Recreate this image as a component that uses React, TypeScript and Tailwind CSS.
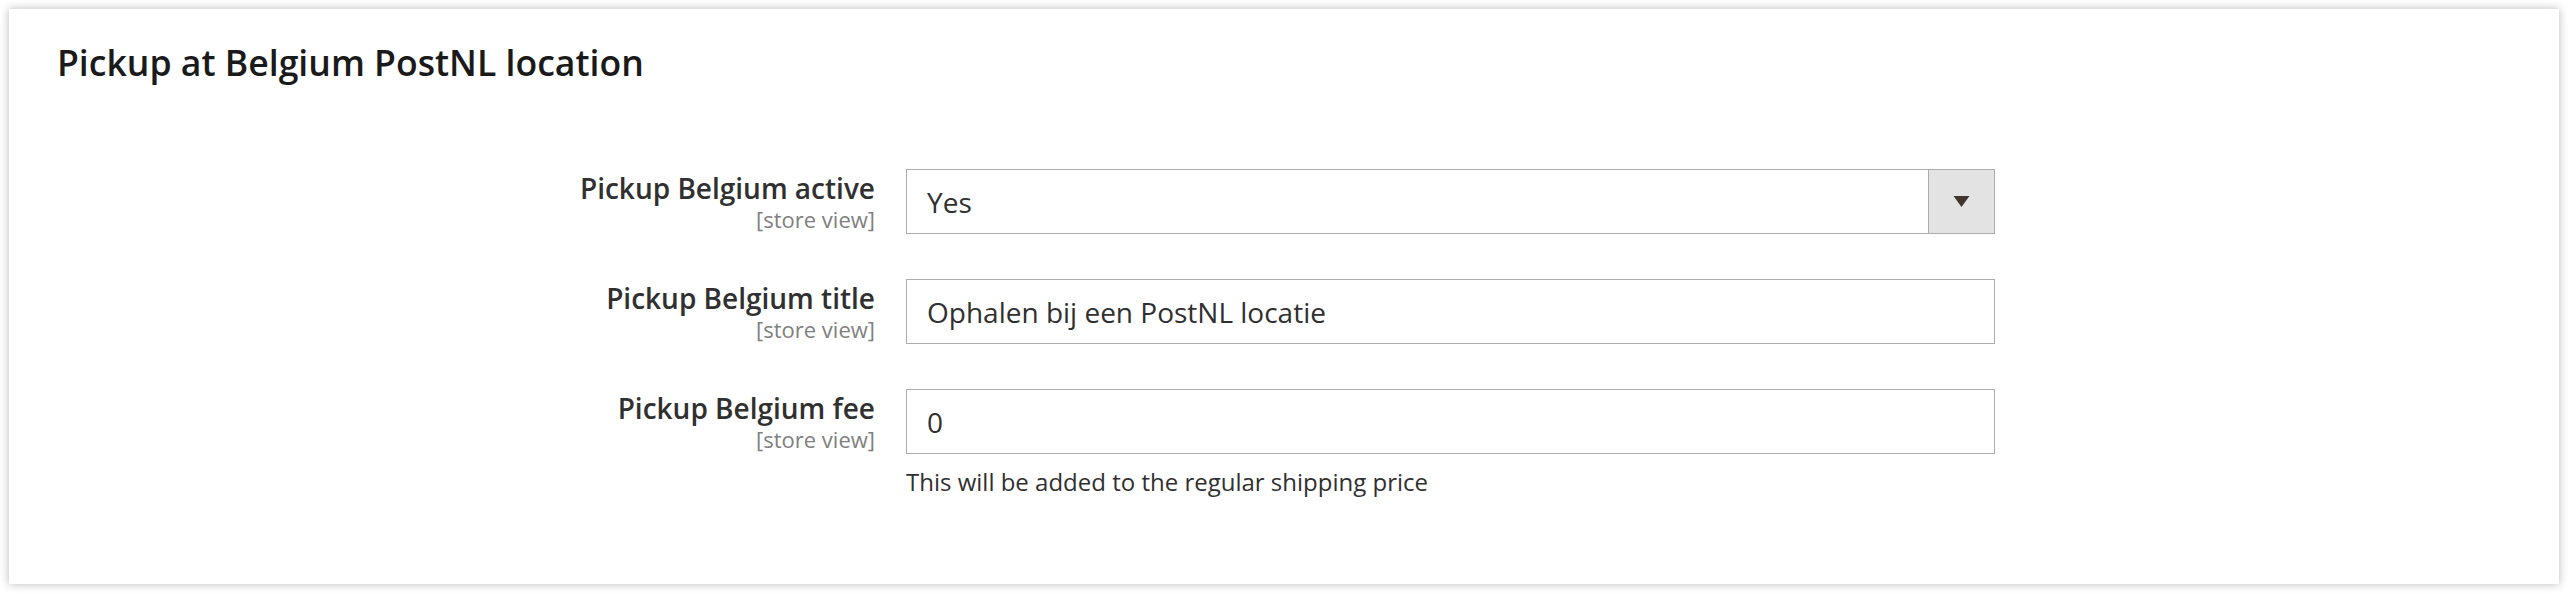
const rows = [
  { label: 'Pickup Belgium active', value: 'Yes', select: true },
  { label: 'Pickup Belgium title', value: 'Ophalen bij een PostNL locatie' },
  { label: 'Pickup Belgium fee', value: '0', note: 'This will be added to the regular shipping price' },
];

type Row = { label: string; value: string; select?: boolean; note?: string };

const Field = ({ row }: { row: Row }) => (
  <div className="flex gap-[31px]">
    <div className="w-[818px] pt-[3px] text-right">
      <div className="text-[28px] leading-[32px] font-semibold text-[#303030]">{row.label}</div>
      <div className="text-[22px] leading-[30px] text-[#808080]">[store view]</div>
    </div>
    <div className="w-[1089px]">
      <div className="flex h-[65px] border border-[#adadad] bg-white">
        <div className="flex flex-1 items-center pl-[20px] text-[28px] text-[#303030]">{row.value}</div>
        {row.select && (
          <div className="flex w-[66px] items-center justify-center border-l border-[#adadad] bg-[#e3e3e3]">
            <svg width="17" height="11" viewBox="0 0 17 11">
              <path d="M0.5 0 H16.5 L8.5 11 Z" fill="#41362f" />
            </svg>
          </div>
        )}
      </div>
      {row.note && <p className="mt-[12px] text-[24px] leading-[32px] text-[#303030]">{row.note}</p>}
    </div>
  </div>
);

export default function App() {
  return (
    <div className="p-[9px] bg-white" style={{ fontFamily: '"Open Sans", sans-serif' }}>
      <section className="h-[575px] bg-white pl-[48px] pt-[31px] shadow-[0_0_9px_rgba(0,0,0,0.28)]">
        <h2 className="text-[35.6px] leading-[44px] font-semibold text-[#1a1a1a]">Pickup at Belgium PostNL location</h2>
        <div className="mt-[85px] flex flex-col gap-[45px]">
          {rows.map((r) => (
            <Field key={r.label} row={r} />
          ))}
        </div>
      </section>
    </div>
  );
}
